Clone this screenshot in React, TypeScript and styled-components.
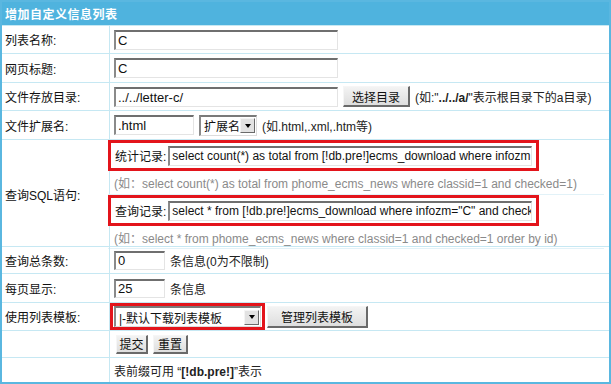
import React from "react";
import styled, { createGlobalStyle } from "styled-components";

const Global = createGlobalStyle`
  html, body { margin: 0; padding: 0; background: #fff; }
  body {
    font-family: "Liberation Sans", "Noto Sans CJK SC", sans-serif;
    font-size: 12px;
    color: #111;
  }
`;

const Frame = styled.div`
  width: 607px;
  height: 380px;
  border: 2px solid #5ab7e0;
  display: flex;
  flex-direction: column;
  overflow: hidden;
`;

const Header = styled.div`
  height: 23px;
  background: #4fb3de;
  color: #fff;
  font-weight: bold;
  font-size: 12px;
  display: flex;
  align-items: center;
  padding-left: 3px;
  letter-spacing: 0.5px;
`;

const Row = styled.div<{ $h: number; $last?: boolean }>`
  display: grid;
  grid-template-columns: 108px 1fr;
  height: ${(p) => p.$h}px;
  border-top: 1px solid #c6e8f3;
  box-sizing: border-box;
  flex: ${(p) => (p.$last ? "1" : "none")};
`;

const Label = styled.div`
  display: flex;
  align-items: center;
  padding-left: 3px;
  border-right: 1px solid #c6e8f3;
  white-space: nowrap;
`;

const Cell = styled.div<{ $pad?: number }>`
  display: flex;
  align-items: center;
  gap: 5px;
  padding-left: ${(p) => (p.$pad ?? 4)}px;
  white-space: nowrap;
  min-width: 0;
`;

const Input = styled.div<{ $w: number; $h?: number; $fs?: number }>`
  width: ${(p) => p.$w}px;
  height: ${(p) => p.$h ?? 20}px;
  box-sizing: border-box;
  border-style: solid;
  border-width: 2px 1px 1px 2px;
  border-color: #6f6f6f #e4e4e4 #e4e4e4 #8a8a8a;
  background: #fff;
  display: flex;
  align-items: center;
  padding-left: 2px;
  font-size: ${(p) => p.$fs ?? 13}px;
  overflow: hidden;
  white-space: nowrap;
  color: #111;
`;

const Button = styled.div<{ $w: number; $h?: number }>`
  width: ${(p) => p.$w}px;
  height: ${(p) => p.$h ?? 21}px;
  box-sizing: border-box;
  border-style: solid;
  border-width: 1px 2px 2px 1px;
  border-color: #f6f6f6 #6a6a6a #6a6a6a #f6f6f6;
  background: linear-gradient(#f3f3f3, #dedede);
  display: flex;
  align-items: center;
  justify-content: center;
  font-size: 12px;
  color: #111;
`;

const Select = styled.div<{ $w: number }>`
  width: ${(p) => p.$w}px;
  height: 21px;
  box-sizing: border-box;
  border-style: solid;
  border-width: 2px 1px 1px 2px;
  border-color: #7a7a7a #dcdcdc #dcdcdc #8a8a8a;
  background: #fff;
  display: flex;
  align-items: center;
  justify-content: space-between;
  padding: 0 1px 0 3px;
  font-size: 12px;
`;

const Arrow = styled.span`
  width: 15px;
  height: 15px;
  box-sizing: border-box;
  border-style: solid;
  border-width: 1px;
  border-color: #f4f4f4 #6a6a6a #6a6a6a #f4f4f4;
  background: #e2e2e2;
  display: flex;
  align-items: center;
  justify-content: center;
  &::after {
    content: "";
    border-left: 3.5px solid transparent;
    border-right: 3.5px solid transparent;
    border-top: 4px solid #000;
  }
`;

const Note = styled.span`
  color: #222;
  font-size: 12px;
`;

const Strong = styled.b`
  font-weight: bold;
`;

const SqlCell = styled.div`
  display: flex;
  flex-direction: column;
  margin-left: -2px;
  padding-top: 0;
`;

const SqlBox = styled.div`
  width: 431px;
  height: 31px;
  box-sizing: border-box;
  border: 3px solid #e3141b;
  display: flex;
  align-items: center;
  gap: 2px;
  padding-left: 4px;
`;

const SqlHint = styled.div<{ $h: number }>`
  height: ${(p) => p.$h}px;
  display: flex;
  align-items: center;
  padding-left: 6px;
  color: #8a8a8a;
  font-size: 12px;
  border-bottom: 1px solid #e2f2f8;
  width: 490px;
  white-space: nowrap;
`;

const TemplateBox = styled.div`
  width: 155px;
  height: 27px;
  box-sizing: border-box;
  border: 3px solid #e3141b;
  display: flex;
  align-items: center;
  padding-left: 1px;
`;

const CellTight = styled(Cell)`
  gap: 2px;
`;

export default function App() {
  return (
    <>
      <Global />
      <Frame>
        <Header>增加自定义信息列表</Header>
        <Row $h={28}>
          <Label>列表名称:</Label>
          <Cell>
            <Input $w={224}>C</Input>
          </Cell>
        </Row>
        <Row $h={29}>
          <Label>网页标题:</Label>
          <Cell>
            <Input $w={224}>C</Input>
          </Cell>
        </Row>
        <Row $h={28}>
          <Label>文件存放目录:</Label>
          <Cell>
            <Input $w={224}>../../letter-c/</Input>
            <Button $w={67}>选择目录</Button>
            <Note>
              (如:"<Strong>../../a/</Strong>"表示根目录下的a目录)
            </Note>
          </Cell>
        </Row>
        <Row $h={29}>
          <Label>文件扩展名:</Label>
          <Cell>
            <Input $w={80}>.html</Input>
            <Select $w={58}>
              扩展名
              <Arrow />
            </Select>
            <Note>(如.html,.xml,.htm等)</Note>
          </Cell>
        </Row>
        <Row $h={107}>
          <Label>查询SQL语句:</Label>
          <SqlCell>
            <SqlBox>
              <span>统计记录:</span>
              <Input $w={364} $fs={12}>select count(*) as total from [!db.pre!]ecms_download where infozm</Input>
            </SqlBox>
            <SqlHint $h={23}>(如：select count(*) as total from phome_ecms_news where classid=1 and checked=1)</SqlHint>
            <SqlBox>
              <span>查询记录:</span>
              <Input $w={364} $fs={12}>select * from [!db.pre!]ecms_download where infozm="C" and check</Input>
            </SqlBox>
            <SqlHint $h={22}>(如：select * from phome_ecms_news where classid=1 and checked=1 order by id)</SqlHint>
          </SqlCell>
        </Row>
        <Row $h={27}>
          <Label>查询总条数:</Label>
          <Cell>
            <Input $w={51} $h={19}>0</Input>
            <Note>条信息(0为不限制)</Note>
          </Cell>
        </Row>
        <Row $h={29}>
          <Label>每页显示:</Label>
          <Cell>
            <Input $w={51} $h={19}>25</Input>
            <Note>条信息</Note>
          </Cell>
        </Row>
        <Row $h={28}>
          <Label>使用列表模板:</Label>
          <CellTight $pad={0}>
            <TemplateBox>
              <Select $w={147}>
                |-默认下载列表模板
                <Arrow />
              </Select>
            </TemplateBox>
            <Button $w={101} $h={22}>管理列表模板</Button>
          </CellTight>
        </Row>
        <Row $h={27}>
          <Label />
          <Cell $pad={6}>
            <Button $w={32} $h={19}>提交</Button>
            <Button $w={35} $h={19}>重置</Button>
          </Cell>
        </Row>
        <Row $h={24} $last>
          <Label />
          <Cell>
            <Note>
              表前缀可用 “<Strong>[!db.pre!]</Strong>”表示
            </Note>
          </Cell>
        </Row>
      </Frame>
    </>
  );
}
